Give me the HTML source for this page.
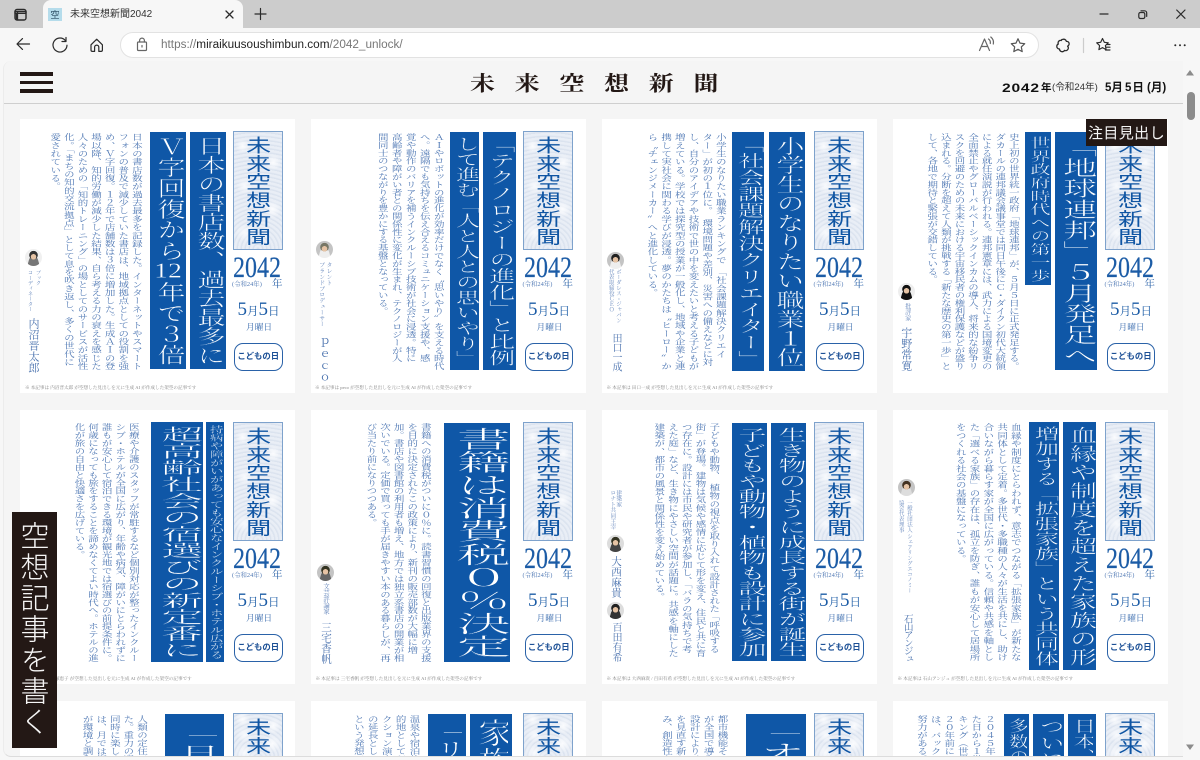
<!DOCTYPE html>
<html lang="ja"><head><meta charset="utf-8"><title>未来空想新聞2042</title>
<style>
html,body{margin:0;padding:0;width:1200px;height:760px;overflow:hidden;background:#f7f7f7}
*{box-sizing:border-box}
body{position:relative;font-family:"Liberation Sans","Noto Sans CJK JP",sans-serif}
#strip{position:absolute;left:0;top:0;width:1200px;height:28px;background:#cccccc}
#tab{position:absolute;left:43px;top:0;width:200px;height:28px;background:#f7f7f7;border-radius:8px 8px 0 0}
#fav{position:absolute;left:48px;top:8px;width:14px;height:13px;background:#b5dceb;font:9px/13px "Noto Sans CJK JP",sans-serif;color:#2a4a60;text-align:center}
#ttl{position:absolute;left:70px;top:7px;font-size:10px;line-height:15px;color:#333;white-space:nowrap}
#bar{position:absolute;left:0;top:28px;width:1200px;height:33px;background:#f7f7f7}
#url{position:absolute;left:120px;top:32px;width:919px;height:26px;background:#fff;border:1px solid #e2e2e2;border-radius:13px}
#urlt{position:absolute;left:161px;top:37px;font-size:11.75px;line-height:16px;color:#777;white-space:nowrap}
#urlt b{font-weight:400;color:#222}
#ico{position:absolute;left:0;top:0}
#frame{position:absolute;left:3px;top:61px;width:1180px;height:696px;background:#f5f5f5;border-radius:8px 0 0 8px;overflow:hidden;border-left:1px solid #ececec;border-bottom:1px solid #dcdcdc}
#inner{position:absolute;left:-4px;top:-61px;width:1200px;height:757px}
#hline{position:absolute;left:3px;top:103px;width:1180px;height:1px;background:#cfcfcf}
.burger{position:absolute;left:20px;width:33px;height:3.5px;background:#231815}
#title{position:absolute;left:470px;top:70px;font-family:"Liberation Serif","Noto Serif CJK SC",serif;font-weight:700;font-size:25px;line-height:30px;letter-spacing:19.7px;color:#231815;white-space:nowrap;transform:scaleY(.82);transform-origin:0 50%}
.dt{position:absolute;top:81px;line-height:14px;color:#111;white-space:nowrap}
.c{position:absolute;width:275px;height:274px;background:#fff}
.c.s{height:56px;overflow:hidden}
.logo{position:absolute;left:212.5px;top:12px;width:50px;height:119px;border:1.5px solid #7ea2cc;background-color:#e6ecf5;
background-image:radial-gradient(circle at 18% 12%,#fbfcfe 0,transparent 7px),radial-gradient(circle at 82% 26%,#fbfcfe 0,transparent 8px),radial-gradient(circle at 22% 46%,#f8fafd 0,transparent 8px),radial-gradient(circle at 80% 66%,#fbfcfe 0,transparent 9px),radial-gradient(circle at 22% 86%,#f8fafd 0,transparent 9px),repeating-radial-gradient(circle at 50% 100%,#dbe3ef 0 1px,#e9eef6 2px 4px)}
.s .logo{height:46px;border-bottom:0}
.logo span{position:absolute;left:50%;top:4px;margin-left:-10px;width:20px;font-size:20px;line-height:20px;writing-mode:vertical-rl;white-space:nowrap;color:#0f55a3;font-weight:400;font-family:"Noto Sans CJK JP",sans-serif;transform-origin:50% 0;transform:scale(1.25,.915)}
.s .logo span{height:40px;overflow:hidden}
.y{position:absolute;left:213px;top:134px;font:30px/30px "Liberation Serif",serif;color:#1c5ca6;-webkit-text-stroke:.2px #1c5ca6;transform:scaleX(.8);transform-origin:0 0;white-space:nowrap}
.wa{position:absolute;left:212px;top:162px;font:6.4px/8px "Liberation Serif","Noto Serif CJK SC",serif;color:#4f78b4;white-space:nowrap}
.ne{position:absolute;left:252px;top:159px;font:10.5px/13px "Liberation Serif","Noto Serif CJK SC",serif;color:#2a62a8}
.md{position:absolute;left:217.5px;top:180px;font:19px/22px "Liberation Serif","Noto Serif CJK SC",serif;color:#1c5ca6;white-space:nowrap}
.md i{font-style:normal;font-size:11.5px}
.wd{position:absolute;left:226px;top:203px;font:8.7px/11px "Liberation Serif","Noto Serif CJK SC",serif;color:#3a6cae;white-space:nowrap}
.pl{position:absolute;left:214px;top:224px;width:48.5px;height:28px;border:1.5px solid #2a62a8;border-radius:9px;background:#fff;font:700 8.4px/25px "Liberation Sans","Noto Sans CJK JP",sans-serif;color:#1b4f95;text-align:center;white-space:nowrap}
.h{position:absolute;background:#0f57a7;color:#fff;overflow:hidden}
.h>span{position:absolute;left:50%;top:4px;margin-left:-10px;width:20px;font-family:"Liberation Serif","Noto Serif CJK SC",serif;font-size:20px;line-height:20px;white-space:nowrap;writing-mode:vertical-rl;-webkit-text-stroke:.3px #0f57a7;transform-origin:50% 0;transform:scale(calc(var(--w)/20),calc(var(--l)/(var(--n)*20)))}
.s .h{height:43px}
.s .h>span{height:calc(39px*var(--n)*20/var(--l));overflow:hidden}
.tcy{text-combine-upright:all}
.b{position:absolute;writing-mode:vertical-rl;white-space:nowrap;font-family:"Liberation Serif","Noto Serif CJK SC",serif;font-size:10.5px;line-height:var(--p);color:#4f78b4;transform-origin:100% 0;transform:scaleY(calc(var(--l)/(var(--n)*10.5)))}
.s .b{height:calc(42px*var(--n)*10.5/var(--l));overflow:hidden}
.r,.n{position:absolute;writing-mode:vertical-rl;white-space:nowrap;font-family:"Liberation Serif","Noto Serif CJK SC",serif}
.r{width:8px;line-height:8px;color:#6385bb}
.n{width:14px;line-height:14px;color:#4a72ae}
.a{position:absolute;width:17px;height:17px;margin:-8.500px 0 0 -8.500px;border-radius:50%;background:radial-gradient(circle at 50% 46%,#e6c3a4 0 21%,transparent 23%),radial-gradient(circle at 50% 36%,var(--hr,#333) 0 30%,transparent 32%),radial-gradient(ellipse at 50% 115%,var(--sh,#555) 0 48%,transparent 50%),var(--bk,#c4c4c4)}
.f{position:absolute;top:266px;font-family:"Liberation Serif","Noto Serif CJK SC",serif;font-size:4.6px;line-height:6px;color:#858585;white-space:nowrap}
#badge{position:absolute;left:1086px;top:119px;width:81px;height:27px;background:#231815;color:#f5f5f5;font:15px/27px "Noto Sans CJK JP",sans-serif;letter-spacing:.4px;text-align:center;white-space:nowrap}
#write{position:absolute;left:12px;top:512px;width:45px;height:236px;background:#231815;color:#f5f5f5;font:29px/45px "Noto Sans CJK JP",sans-serif;writing-mode:vertical-rl;letter-spacing:2px;padding-top:9px;white-space:nowrap;font-weight:300}
#thumb{position:absolute;left:1187px;top:92px;width:8px;height:28px;border-radius:4px;background:#8c8c8c}
</style></head><body>
<div id="strip"></div>
<div id="tab"></div>
<div id="fav">空</div>
<div id="ttl">未来空想新聞2042</div>
<div id="bar"></div>
<div id="url"></div>
<div id="urlt">https://<b>miraikuusoushimbun.com</b>/2042_unlock/</div>

<div id="frame"><div id="inner">
<div id="hline"></div>
<div class="burger" style="top:72px"></div>
<div class="burger" style="top:80.5px"></div>
<div class="burger" style="top:89px"></div>
<div id="title">未来空想新聞</div>
<div class="dt" style="left:1002px;font-weight:700;font-size:12px;letter-spacing:.6px;transform:scaleX(1.3);transform-origin:0 50%">2042</div>
<div class="dt" style="left:1041px;font-weight:700;font-size:10.5px">年</div>
<div class="dt" style="left:1052px;font-size:9.6px;color:#333">(令和24年)</div>
<div class="dt" style="left:1105px;font-weight:700;font-size:11.5px">5月</div>
<div class="dt" style="left:1125px;font-weight:700;font-size:11.5px;letter-spacing:1px">5日</div>
<div class="dt" style="left:1147px;font-weight:700;font-size:11.5px">(月)</div>

<!-- Card 1 -->
<div class="c" style="left:20px;top:119px">
<div class="logo"><span>未来空想新聞</span></div><div class="y">2042</div><div class="wa">(令和24年)</div><div class="ne">年</div><div class="md">5<i>月</i>5<i>日</i></div><div class="wd">月曜日</div><div class="pl">こどもの日</div>
<div class="h" style="left:170px;top:13px;width:36px;height:237px;--n:12;--w:28;--l:229"><span>日本の書店数、過去最多に</span></div>
<div class="h" style="left:130px;top:13px;width:36px;height:237px;--n:11;--w:28;--l:229"><span>Ｖ字回復から<span class="tcy">12</span>年で３倍</span></div>
<div class="b" style="right:152.2px;top:14px;--p:13.6px;--n:29;--l:237">日本の書店数が過去最多を記録した。インターネットやスマート<br>フォンの普及で減少していた書店は、地域拠点としての役割を強<br>め、Ｖ字回復。１２年で店舗数は３倍に増加した。生成ＡＩの登<br>場以降、知的労働が減少した結果、自ら考える力の衰えを感じた<br>人々のための「知的トレーニング」の場としてのサービスが活性<br>化。「まちの知的交流拠点」として息を吹き返し、多くの世代に<br>愛されている。</div>
<div class="a" style="left:13px;top:138px;--bk:#f0f0f0;--sh:#777"></div>
<div class="r" style="left:14px;top:151px;font-size:5.2px">ブック</div>
<div class="r" style="left:6px;top:151px;font-size:5.2px">コーディネーター</div>
<div class="n" style="left:6px;top:199px;font-size:11px">内沼晋太郎</div>
<div class="f" style="left:5px">※ 本記事は 内沼晋太郎 が空想した見出しを元に生成 AI が作成した架空の記事です</div>
</div>

<!-- Card 2 -->
<div class="c" style="left:310.5px;top:119px">
<div class="logo"><span>未来空想新聞</span></div><div class="y">2042</div><div class="wa">(令和24年)</div><div class="ne">年</div><div class="md">5<i>月</i>5<i>日</i></div><div class="wd">月曜日</div><div class="pl">こどもの日</div>
<div class="h" style="left:172.8px;top:13px;width:32.4px;height:238px;--n:14;--w:26;--l:230"><span>「テクノロジーの進化」と比例</span></div>
<div class="h" style="left:139.8px;top:13px;width:29px;height:238px;--n:15;--w:24;--l:230"><span>して進む「人と人との思いやり」</span></div>
<div class="b" style="right:140.8px;top:14px;--p:14px;--n:30;--l:237">ＡＩやロボットの進化が効率だけでなく〝思いやり〟を支える時代<br>へ。遠隔でも気持ちを伝え合えるコミュニケーション支援や、感<br>覚や動作のバリアを補うインクルーシブ技術が社会に浸透。特に<br>高齢者や障がい者との関係性に変化が生まれ、テクノロジーが人<br>間同士のつながりを豊かにする基盤となっている。</div>
<div class="a" style="left:13.8px;top:130.3px;--hr:#776;--sh:#eee"></div>
<div class="r" style="left:13.5px;top:143px;font-size:5.9px">タレント</div>
<div class="r" style="left:6.2px;top:143px;font-size:5.9px">ブランドプロデューサー</div>
<div class="n" style="left:6.5px;top:218px;font-size:11px;letter-spacing:.7px">ｐｅｃｏ</div>
<div class="f" style="left:4.5px">※ 本記事は peco が空想した見出しを元に生成 AI が作成した架空の記事です</div>
</div>

<!-- Card 3 -->
<div class="c" style="left:601.5px;top:119px">
<div class="logo"><span>未来空想新聞</span></div><div class="y">2042</div><div class="wa">(令和24年)</div><div class="ne">年</div><div class="md">5<i>月</i>5<i>日</i></div><div class="wd">月曜日</div><div class="pl">こどもの日</div>
<div class="h" style="left:167.2px;top:13px;width:36px;height:239px;--n:12;--w:28;--l:231"><span>小学生のなりたい職業１位</span></div>
<div class="h" style="left:130.5px;top:13px;width:32px;height:239px;--n:14;--w:26;--l:231"><span>「社会課題解決クリエイター」</span></div>
<div class="b" style="right:149.6px;top:14px;--p:13.7px;--n:29;--l:237">小学生のなりたい職業ランキングで　「社会課題解決クリエイ<br>ター」が初の１位に。　環境問題や差別、災害への備えなどに対<br>し、自分のアイデアや技術で世の中を変えたいと考える子どもが<br>増えている。学校では探究型の授業が一般化し、地域や企業と連<br>携して実社会に関わる学びが浸透。夢のかたちは〝ヒーロー〟か<br>ら〝チェンジメーカー〟へと進化している。</div>
<div class="a" style="left:13.5px;top:141px;--hr:#222;--sh:#eee"></div>
<div class="r" style="left:12.5px;top:150px;font-size:5.4px">ボーダレス・ジャパン</div>
<div class="r" style="left:5.2px;top:150px;font-size:5.4px">代表取締役ＣＥＯ</div>
<div class="n" style="left:6.5px;top:214px;font-size:10px;letter-spacing:-.5px">田口一成</div>
<div class="f" style="left:5px">※ 本記事は 田口一成 が空想した見出しを元に生成 AI が作成した架空の記事です</div>
</div>

<!-- Card 4 -->
<div class="c" style="left:892.5px;top:119px">
<div class="logo"><span>未来空想新聞</span></div><div class="y">2042</div><div class="wa">(令和24年)</div><div class="ne">年</div><div class="md">5<i>月</i>5<i>日</i></div><div class="wd">月曜日</div><div class="pl">こどもの日</div>
<div class="h" style="left:162.5px;top:13px;width:42px;height:238px;--n:11;--w:34;--l:230"><span>「地球連邦」５月発足へ</span></div>
<div class="h" style="left:132.8px;top:13px;width:25.4px;height:153px;--n:11;--w:20;--l:146"><span>世界政府時代への第一歩</span></div>
<div class="b" style="right:147.7px;top:14px;--p:13.6px;--n:30;--l:237">史上初の世界統一政府「地球連邦」が、５月５日に正式発足する。<br>ダカールの連邦議会議事堂では同日午後にＣ・ダイクン初代大統領<br>による就任演説が行われる。連邦憲章には、武力による国境変更の<br>全面禁止やグローバルベーシックインカムの導入、将来的な紛争リ<br>スクを回避のための未来における宇宙移民者の権利保護などが盛り<br>込まれる。分断を超えて人類が挑戦する「新たな歴史の第一歩」と<br>して、各地で期待と緊張が交錯している。</div>
<div class="a" style="left:14.2px;top:172px;--bk:#eee;--hr:#111;--sh:#111"></div>
<div class="r" style="left:10.2px;top:184px;font-size:6px">批評家</div>
<div class="n" style="left:6.2px;top:208px;font-size:11px">宇野常寛</div>
</div>

<!-- Card 5 -->
<div class="c" style="left:20px;top:410px">
<div class="logo"><span>未来空想新聞</span></div><div class="y">2042</div><div class="wa">(令和24年)</div><div class="ne">年</div><div class="md">5<i>月</i>5<i>日</i></div><div class="wd">月曜日</div><div class="pl">こどもの日</div>
<div class="h" style="left:186.3px;top:12px;width:18px;height:240px;--n:28;--w:13.5;--l:234"><span style="top:3px">持病や障がいがあっても安心なインクルーシブ・ホテル広がる</span></div>
<div class="h" style="left:130.7px;top:12px;width:52px;height:240px;--n:14;--w:42;--l:232"><span>超高齢社会の宿選びの新定番に</span></div>
<div class="b" style="right:155.2px;top:13px;--p:13.6px;--n:30;--l:239">医療や介護のスタッフが常駐するなど個別対応が整ったインクルー<br>シブ・ホテルが全国に広がり、年齢や病気、障がいにとらわれずに<br>誰もが安心して宿泊できる環境が観光地では宿選びの前提条件に。<br>何歳になっても旅をすることを諦めなくてよい時代へ。ホテルの進<br>化が旅の自由と快適さを広げている。</div>
<div class="f" style="left:5px">※ 本記事は 篠塚恵子 が空想した見出しを元に生成 AI が作成した架空の記事です</div>
</div>

<!-- Card 6 -->
<div class="c" style="left:310.5px;top:410px">
<div class="logo"><span>未来空想新聞</span></div><div class="y">2042</div><div class="wa">(令和24年)</div><div class="ne">年</div><div class="md">5<i>月</i>5<i>日</i></div><div class="wd">月曜日</div><div class="pl">こどもの日</div>
<div class="h" style="left:133.5px;top:13px;width:66.3px;height:239px;--n:10;--w:54;--l:231"><span>書籍は消費税０％決定</span></div>
<div class="b" style="right:153.7px;top:13px;--p:13.6px;--n:30;--l:239">書籍への消費税がついに０％に。読書習慣の回復と出版業界の支援<br>を目的に決定されたこの政策により、新刊の販売部数が大幅に増<br>加。書店や図書館の利用者も増え、地方では独立系書店の開業が相<br>次いでいる。定価で買っても手が届きやすい本のある暮らしが、再<br>び当たり前になりつつある。</div>
<div class="a" style="left:14.5px;top:162px;--hr:#332;--sh:#666"></div>
<div class="r" style="left:10.5px;top:173px;font-size:6.3px">文芸評論家</div>
<div class="n" style="left:7.5px;top:212px;font-size:10.5px">三宅香帆</div>
<div class="f" style="left:5px">※ 本記事は 三宅香帆 が空想した見出しを元に生成 AI が作成した架空の記事です</div>
</div>

<!-- Card 7 -->
<div class="c" style="left:601.5px;top:410px">
<div class="logo"><span>未来空想新聞</span></div><div class="y">2042</div><div class="wa">(令和24年)</div><div class="ne">年</div><div class="md">5<i>月</i>5<i>日</i></div><div class="wd">月曜日</div><div class="pl">こどもの日</div>
<div class="h" style="left:169.8px;top:13px;width:34.7px;height:238px;--n:15;--w:28;--l:230"><span>生き物のように成長する街が誕生</span></div>
<div class="h" style="left:130.2px;top:13px;width:35px;height:238px;--n:15;--w:28;--l:230"><span>子どもや動物・植物も設計に参加</span></div>
<div class="b" style="right:156.3px;top:13px;--p:13.7px;--n:29;--l:234">子どもや動物、　植物の視点を取り入れて設計された「呼吸する<br>街」が登場。建物は気候や感情に応じて形を変え、住民と共に育<br>つ存在に。設計には市民や研究者が参加し、「バラの気持ちで考<br>えた庭」など、生き物にやさしい空間が話題に。共感を軸にした<br>建築が、都市の風景と関係性を変え始めている。</div>
<div class="r" style="left:12.2px;top:80px;font-size:5.7px">建築家</div>
<div class="r" style="left:6.2px;top:80px;font-size:5.7px">ロナト共同主宰</div>
<div class="a" style="left:13.5px;top:133px;--bk:#ddd;--hr:#332;--sh:#444"></div>
<div class="n" style="left:6.5px;top:146px;font-size:10.5px">大西麻貴</div>
<div class="a" style="left:13.5px;top:200px;--bk:#ddd;--hr:#222;--sh:#333"></div>
<div class="n" style="left:6.5px;top:212px;font-size:10px">百田有希</div>
<div class="f" style="left:5px">※ 本記事は 大西麻貴 / 百田有希 が空想した見出しを元に生成 AI が作成した架空の記事です</div>
</div>

<!-- Card 8 -->
<div class="c" style="left:892.5px;top:410px">
<div class="logo"><span>未来空想新聞</span></div><div class="y">2042</div><div class="wa">(令和24年)</div><div class="ne">年</div><div class="md">5<i>月</i>5<i>日</i></div><div class="wd">月曜日</div><div class="pl">こどもの日</div>
<div class="h" style="left:170.8px;top:12px;width:33px;height:248px;--n:13;--w:27;--l:240"><span>血縁や制度を超えた家族の形</span></div>
<div class="h" style="left:136.8px;top:12px;width:29.7px;height:248px;--n:16;--w:24;--l:240"><span>増加する「拡張家族」という共同体</span></div>
<div class="b" style="right:145.6px;top:13px;--p:13.8px;--n:29;--l:238">血縁や制度にとらわれず、意志でつながる「拡張家族」が新たな<br>共同体として定着。多世代・多職種の人々が生活を共にし、助け<br>合いながら暮らす家が全国に広がっている。信頼や共感を軸とし<br>た「選べる家族」の存在は、孤立を防ぎ、誰もが安心して居場所<br>をつくれる社会の基盤になっている。</div>
<div class="a" style="left:14.2px;top:77.7px;--hr:#432;--sh:#ddd"></div>
<div class="r" style="left:12.5px;top:90px;font-size:5.4px">一般社団法人 シェアリングエコノミー</div>
<div class="r" style="left:4.2px;top:90px;font-size:5.4px">協会代表理事</div>
<div class="n" style="left:7.2px;top:204px;font-size:9.5px;letter-spacing:-1.5px">石山アンジュ</div>
<div class="f" style="left:5px">※ 本記事は 石山アンジュ が空想した見出しを元に生成 AI が作成した架空の記事です</div>
</div>

<!-- Row 3 -->
<div class="c s" style="left:20px;top:701px">
<div class="logo"><span>未来</span></div>
<div class="h" style="left:144.7px;top:13px;width:59px;--n:9;--w:46;--l:230"><span>「月面</span></div>
<div class="b" style="right:147px;top:14px;--p:13.6px;--n:30;--l:240">人類の定住が<br>た。重力の選<br>同時に楽しめ<br>は、月では衛<br>が環境と調和</div>
</div>
<div class="c s" style="left:310.5px;top:701px">
<div class="logo"><span>未来</span></div>
<div class="h" style="left:159.5px;top:13px;width:42px;--n:8;--w:34;--l:230"><span>家族</span></div>
<div class="h" style="left:117.5px;top:13px;width:37.5px;--n:11;--w:30;--l:230"><span>「リゾ</span></div>
<div class="b" style="right:165px;top:14px;--p:13.9px;--n:30;--l:240">温泉や宿泊施<br>的地としてだ<br>クション演出<br>の延長として<br>という発想が</div>
</div>
<div class="c s" style="left:601.5px;top:701px">
<div class="logo"><span>未来</span></div>
<div class="h" style="left:144.5px;top:13px;width:60px;--n:10;--w:48;--l:230"><span>「オヤ</span></div>
<div class="b" style="right:148px;top:14px;--p:13.9px;--n:30;--l:240">都市機能そのも<br>が全国で導入さ<br>設計により、住<br>を見直す新たな<br>み、創造性を</div>
</div>
<div class="c s" style="left:892.5px;top:701px">
<div class="logo"><span>未来</span></div>
<div class="h" style="left:175.5px;top:13px;width:27.7px;--n:15;--w:22;--l:230"><span>日本、</span></div>
<div class="h" style="left:140.5px;top:13px;width:31px;--n:14;--w:25;--l:230"><span>ついに</span></div>
<div class="h" style="left:111.5px;top:13px;width:25px;--n:15;--w:20;--l:230"><span>多数の</span></div>
<div class="b" style="right:171.5px;top:14px;--p:13.6px;--n:30;--l:240">２０４５年の<br>た日から１世<br>キング（世界<br>２０年前には<br>は、バックパ<br>努力がある。</div>
</div>

<div id="badge">注目見出し</div>
<div id="write">空想記事を書く</div>
</div></div>

<div id="thumb"></div>
<svg id="ico" width="1200" height="760" viewBox="0 0 1200 760" fill="none" stroke="#2b2b2b" stroke-width="1.2" stroke-linecap="round" stroke-linejoin="round">
<rect x="15" y="9.5" width="11" height="10.5" rx="2" stroke-width="1.4"/><path d="M15 11.5h11v1.8H15zM17.5 12v7.5" stroke-width="1.3"/><path d="M15.7 13h1.6v6.5h-1.6z" fill="#2b2b2b" stroke="none"/>
<path d="M226 11l7 7M233 11l-7 7" stroke-width="1.3"/>
<path d="M260.5 8.5v11M255 14h11" stroke-width="1.2"/>
<path d="M1100 14h8"/><rect x="1138.8" y="12.5" width="6" height="6" rx="1.6"/><path d="M1141 10.8h3.5a2.2 2.2 0 0 1 2.2 2.2v3.4"/><path d="M1176.7 10l8.3 8.3M1185 10l-8.3 8.3"/>
<path d="M29.5 44H17.3M22.5 38.6L17 44l5.5 5.4" stroke-width="1.2"/>
<path d="M65.5 40.7A7 7 0 1 0 67 45.2" /><path d="M66 37.5v4h-4"/>
<path d="M91 44.8l5.7-5.6 5.7 5.6v5.2a1.4 1.4 0 0 1-1.4 1.4h-2.2v-4.2a2.1 2.1 0 0 0-4.2 0v4.2h-2.2a1.4 1.4 0 0 1-1.4-1.4z"/>
<g stroke="#666"><rect x="137.5" y="42" width="9" height="8.5" rx="1"/><path d="M139.6 42v-1.500a2.4 2.4 0 0 1 4.8 0V42"/><path d="M142 45.5v1.500"/></g>
<g stroke="#666"><path d="M979.5 50.5l5-11.500 5 11.500M981.3 46.5h6.400"/><path d="M988.5 39q2.300 1.500 1.800 4.500M990.8 37q3.400 2.800 2.500 7"/></g>
<path stroke="#555" d="M1018 38.8l2 4.300 4.700.6-3.400 3.200.9 4.700-4.200-2.300-4.200 2.300.9-4.700-3.400-3.200 4.700-.6z"/>
<path d="M1062.5 39.5c1.800-.8 3.500 .2 3.900 1.900 1.800-.2 3.100 1.200 2.700 3-.2 .9-.9 1.500-1.500 1.800 .7 .8 1 2 .4 3-.7 1.300-2.200 1.800-3.500 1.200-.6 1.100-2.200 1.700-3.500 1-1-.5-1.500-1.500-1.500-2.400-1.500 .1-2.900-1.200-2.700-2.900 .1-1 .8-1.800 1.500-2.100-.6-1.300 0-2.900 1.400-3.500 .6-.2 1.100-.2 1.600 0 .1-.5 .2-.8 .7-1z" stroke-width="1.3"/>
<path stroke="#ccc" d="M1083.5 38.5v14"/>
<path d="M1102.5 38.5l1.800 3.800 4 .5-2.900 2.800.7 4-3.600-2-3.600 2 .7-4-2.900-2.800 4-.5zM1106.5 44.500h3.500M1106.5 47.200h3.500M1105.5 50h4.500" stroke-width="1.15"/>
<g fill="#2b2b2b" stroke="none"><circle cx="1175.3" cy="45.3" r="1"/><circle cx="1180" cy="45.3" r="1"/><circle cx="1184.7" cy="45.3" r="1"/></g>
<path fill="#8c8c8c" stroke="none" d="M1186 75.5l4-5.500 4 5.500zM1186 744.5h8l-4 5.500z"/>
</svg>
</body></html>
